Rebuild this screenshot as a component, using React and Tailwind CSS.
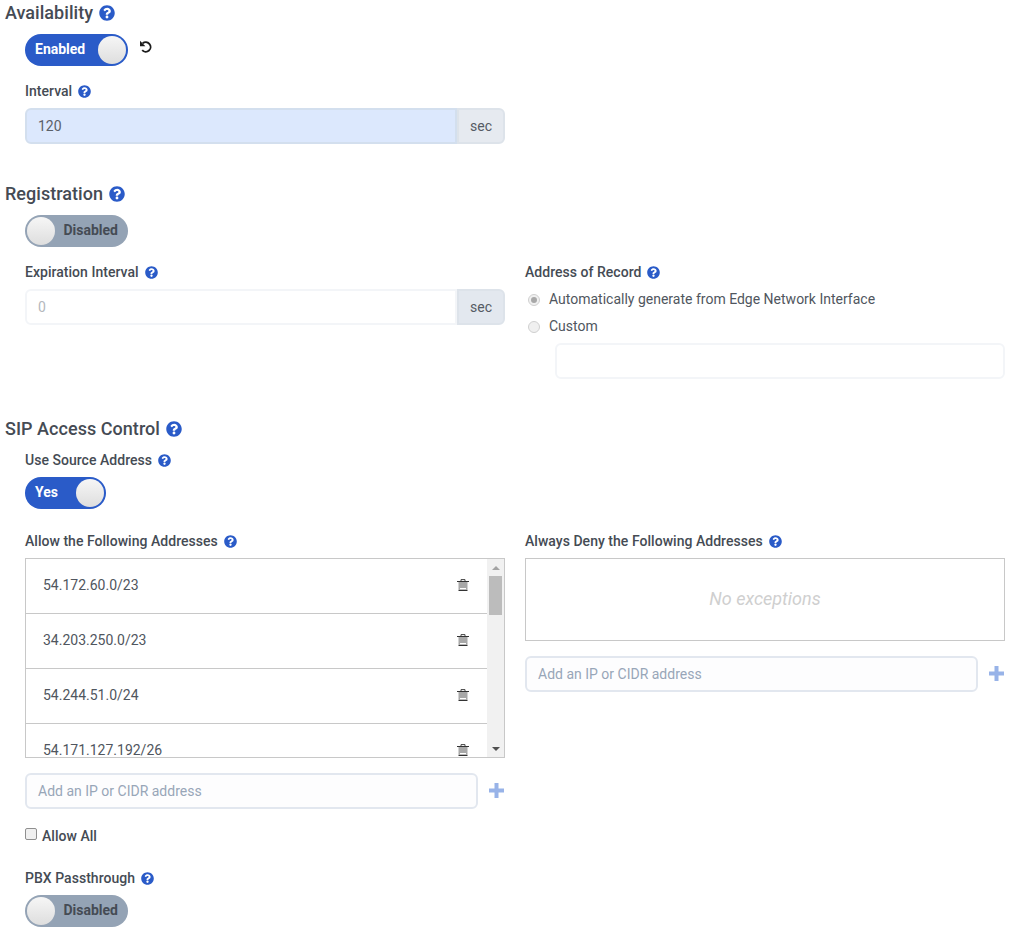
import React from "react";
import { FaQuestionCircle } from "react-icons/fa";

const Help = ({ size = 13 }) => (
  <FaQuestionCircle size={size} className="text-[#2a5bc8] shrink-0" />
);

const Heading = ({ children, className = "" }) => (
  <h2 className={`flex items-center gap-[6px] h-[26px] text-[18px] font-medium text-[#454b54] tracking-[0.04px] ${className}`}>
    <span className="pb-[2px]">{children}</span>
    <Help size={16} />
  </h2>
);

const Label = ({ children, help = true, className = "" }) => (
  <div className={`flex items-center gap-[6px] h-[18px] text-[14px] font-medium text-[#454b54] tracking-[0.03px] ${className}`}>
    {children}
    {help && <Help />}
  </div>
);

const Knob = () => (
  <span className="block w-[28px] h-[28px] rounded-full bg-gradient-to-b from-[#f6f6f6] to-[#dedede] shrink-0" />
);

const Toggle = ({ on, label, width }) => (
  <div
    className={`flex items-center justify-between h-[32px] rounded-full px-[2px] text-[14px] font-bold shrink-0 ${
      on ? "bg-[#2a5bc8] text-white" : "bg-[#94a3b5] text-[#454b54]"
    } ${width}`}
  >
    {on ? (
      <>
        <span className="pl-[8px] pb-[2px]">{label}</span>
        <Knob />
      </>
    ) : (
      <>
        <Knob />
        <span className="pr-[8px] pb-[2px]">{label}</span>
      </>
    )}
  </div>
);

const InputGroup = ({ value, active }) => (
  <div className="flex h-[36px] mt-[8px]">
    <div
      className={`flex-1 flex items-center pl-[11px] text-[14px] rounded-l-[6px] border-2 ${
        active ? "bg-[#dce8fd] border-[#d3dfee] text-[#5a6068]" : "bg-white border-[#f3f5f8] text-[#b4b8bd]"
      }`}
    >
      {value}
    </div>
    <div
      className={`w-[48px] flex items-center justify-center text-[14px] text-[#555b64] border-2 border-[#dde3ea] rounded-r-[6px] ${
        active ? "bg-[#e6eaf0]" : "bg-[#e3e8ef]"
      }`}
    >
      sec
    </div>
  </div>
);

const Radio = ({ checked, children }) => (
  <div className="flex items-center h-[27px] text-[14px] text-[#50565e]">
    <span className="w-[12px] h-[12px] ml-[3px] mr-[9px] rounded-full border border-[#d0d0d0] bg-[#f0f0f0] flex items-center justify-center">
      {checked && <span className="w-[6px] h-[6px] rounded-full bg-[#a8a8a8]" />}
    </span>
    {children}
  </div>
);

const Plus = () => (
  <svg width="15" height="15" viewBox="0 0 15 15" className="shrink-0 -mt-[2px]">
    <path d="M5.5 0h4v5.5H15v4H9.5V15h-4V9.5H0v-4h5.5z" fill="#98b3e8" />
  </svg>
);

const Trash = () => (
  <svg width="12" height="12" viewBox="0 0 12 12" className="shrink-0">
    <path d="M4 2V0.6h4V2" fill="none" stroke="#444" strokeWidth="1" />
    <rect x="0" y="2" width="12" height="1" fill="#333" />
    <rect x="1.5" y="3" width="9" height="8" fill="#a8a8a8" />
    <rect x="3" y="9" width="6" height="1.2" fill="#ffffff" />
    <rect x="1.5" y="11" width="9" height="1" fill="#333" />
  </svg>
);

const Undo = () => (
  <svg width="14" height="14" viewBox="0 0 14 14" className="shrink-0 mt-[6px] ml-[1px]">
    <path d="M3.6 3.4A4.8 4.8 0 1 1 3.2 10.2" fill="none" stroke="#1c1c1c" strokeWidth="1.9" />
    <path d="M1 0.8V6.2H6.4z" fill="#1c1c1c" />
  </svg>
);

const AddRow = ({ className = "" }) => (
  <div className={`flex items-center h-[36px] gap-[11px] ${className}`}>
    <div className="flex-1 h-full flex items-center pl-[11px] text-[14px] text-[#98a6b8] bg-[#fdfdfe] border-2 border-[#e2e7ef] rounded-[6px]">
      Add an IP or CIDR address
    </div>
    <span className="flex items-center mr-[1px]">
      <Plus />
    </span>
  </div>
);

const rows = ["54.172.60.0/23", "34.203.250.0/23", "54.244.51.0/24", "54.171.127.192/26"];

const ScrollBar = () => (
  <div className="w-[17px] h-full bg-[#f1f1f1] flex flex-col items-center shrink-0">
    <div className="h-[17px] flex items-center justify-center">
      <span className="w-0 h-0 border-x-[4px] border-x-transparent border-b-[4px] border-b-[#a3a3a3]" />
    </div>
    <div className="w-[13px] h-[39px] bg-[#bcbcbc]" />
    <div className="flex-1" />
    <div className="h-[17px] flex items-center justify-center">
      <span className="w-0 h-0 border-x-[4px] border-x-transparent border-t-[4px] border-t-[#505050]" />
    </div>
  </div>
);

export default function App() {
  return (
    <div className="bg-white w-[1021px] h-[937px] overflow-hidden pl-[5px] font-['Roboto',sans-serif]">
      <Heading>Availability</Heading>
      <div className="pl-[20px] w-[500px]">
        <div className="flex items-start gap-[10px] mt-[8px]">
          <Toggle on label="Enabled" width="w-[103px]" />
          <Undo />
        </div>
        <Label className="mt-[16px]">Interval</Label>
        <InputGroup value="120" active />
      </div>

      <Heading className="mt-[37px]">Registration</Heading>
      <div className="pl-[20px] w-[1000px]">
        <div className="mt-[8px]">
          <Toggle label="Disabled" width="w-[103px]" />
        </div>
        <div className="grid grid-cols-[480px_480px] gap-x-[20px] mt-[16px]">
          <div>
            <Label>Expiration Interval</Label>
            <InputGroup value="0" />
          </div>
          <div>
            <Label>Address of Record</Label>
            <div className="mt-[5px]">
              <Radio checked>Automatically generate from Edge Network Interface</Radio>
              <Radio>Custom</Radio>
            </div>
            <div className="ml-[30px] mt-[3px] h-[36px] bg-white border-2 border-[#f3f5f8] rounded-[6px]" />
          </div>
        </div>
      </div>

      <Heading className="mt-[37px]">SIP Access Control</Heading>
      <div className="pl-[20px] w-[1000px]">
        <Label className="mt-[9px]">Use Source Address</Label>
        <div className="mt-[8px]">
          <Toggle on label="Yes" width="w-[81px]" />
        </div>
        <div className="grid grid-cols-[480px_480px] gap-x-[20px] mt-[23px]">
          <div>
            <Label>Allow the Following Addresses</Label>
            <div className="flex h-[200px] mt-[8px] border border-[#c8c8c8] overflow-hidden">
              <div className="flex-1 overflow-hidden">
                {rows.map((r) => (
                  <div
                    key={r}
                    className="flex items-center justify-between h-[55px] pl-[17px] pr-[18px] pb-[2px] text-[14px] text-[#50565e] border-b border-[#c8c8c8]"
                  >
                    {r}
                    <Trash />
                  </div>
                ))}
              </div>
              <ScrollBar />
            </div>
            <AddRow className="mt-[15px]" />
            <label className="flex items-center h-[18px] mt-[18px] text-[14px] font-medium text-[#454b54] tracking-[0.03px]">
              <span className="w-[12px] h-[12px] mr-[5px] rounded-[2px] border border-[#8f8f8f] bg-[#f0f0f0] -mt-[4px]" />
              Allow All
            </label>
            <Label className="mt-[24px]">PBX Passthrough</Label>
            <div className="mt-[8px]">
              <Toggle label="Disabled" width="w-[103px]" />
            </div>
          </div>
          <div>
            <Label>Always Deny the Following Addresses</Label>
            <div className="flex items-center justify-center h-[83px] mt-[8px] pb-[2px] border border-[#c8c8c8] text-[18px] italic text-[#cfcfcf]">
              No exceptions
            </div>
            <AddRow className="mt-[15px]" />
          </div>
        </div>
      </div>
    </div>
  );
}
